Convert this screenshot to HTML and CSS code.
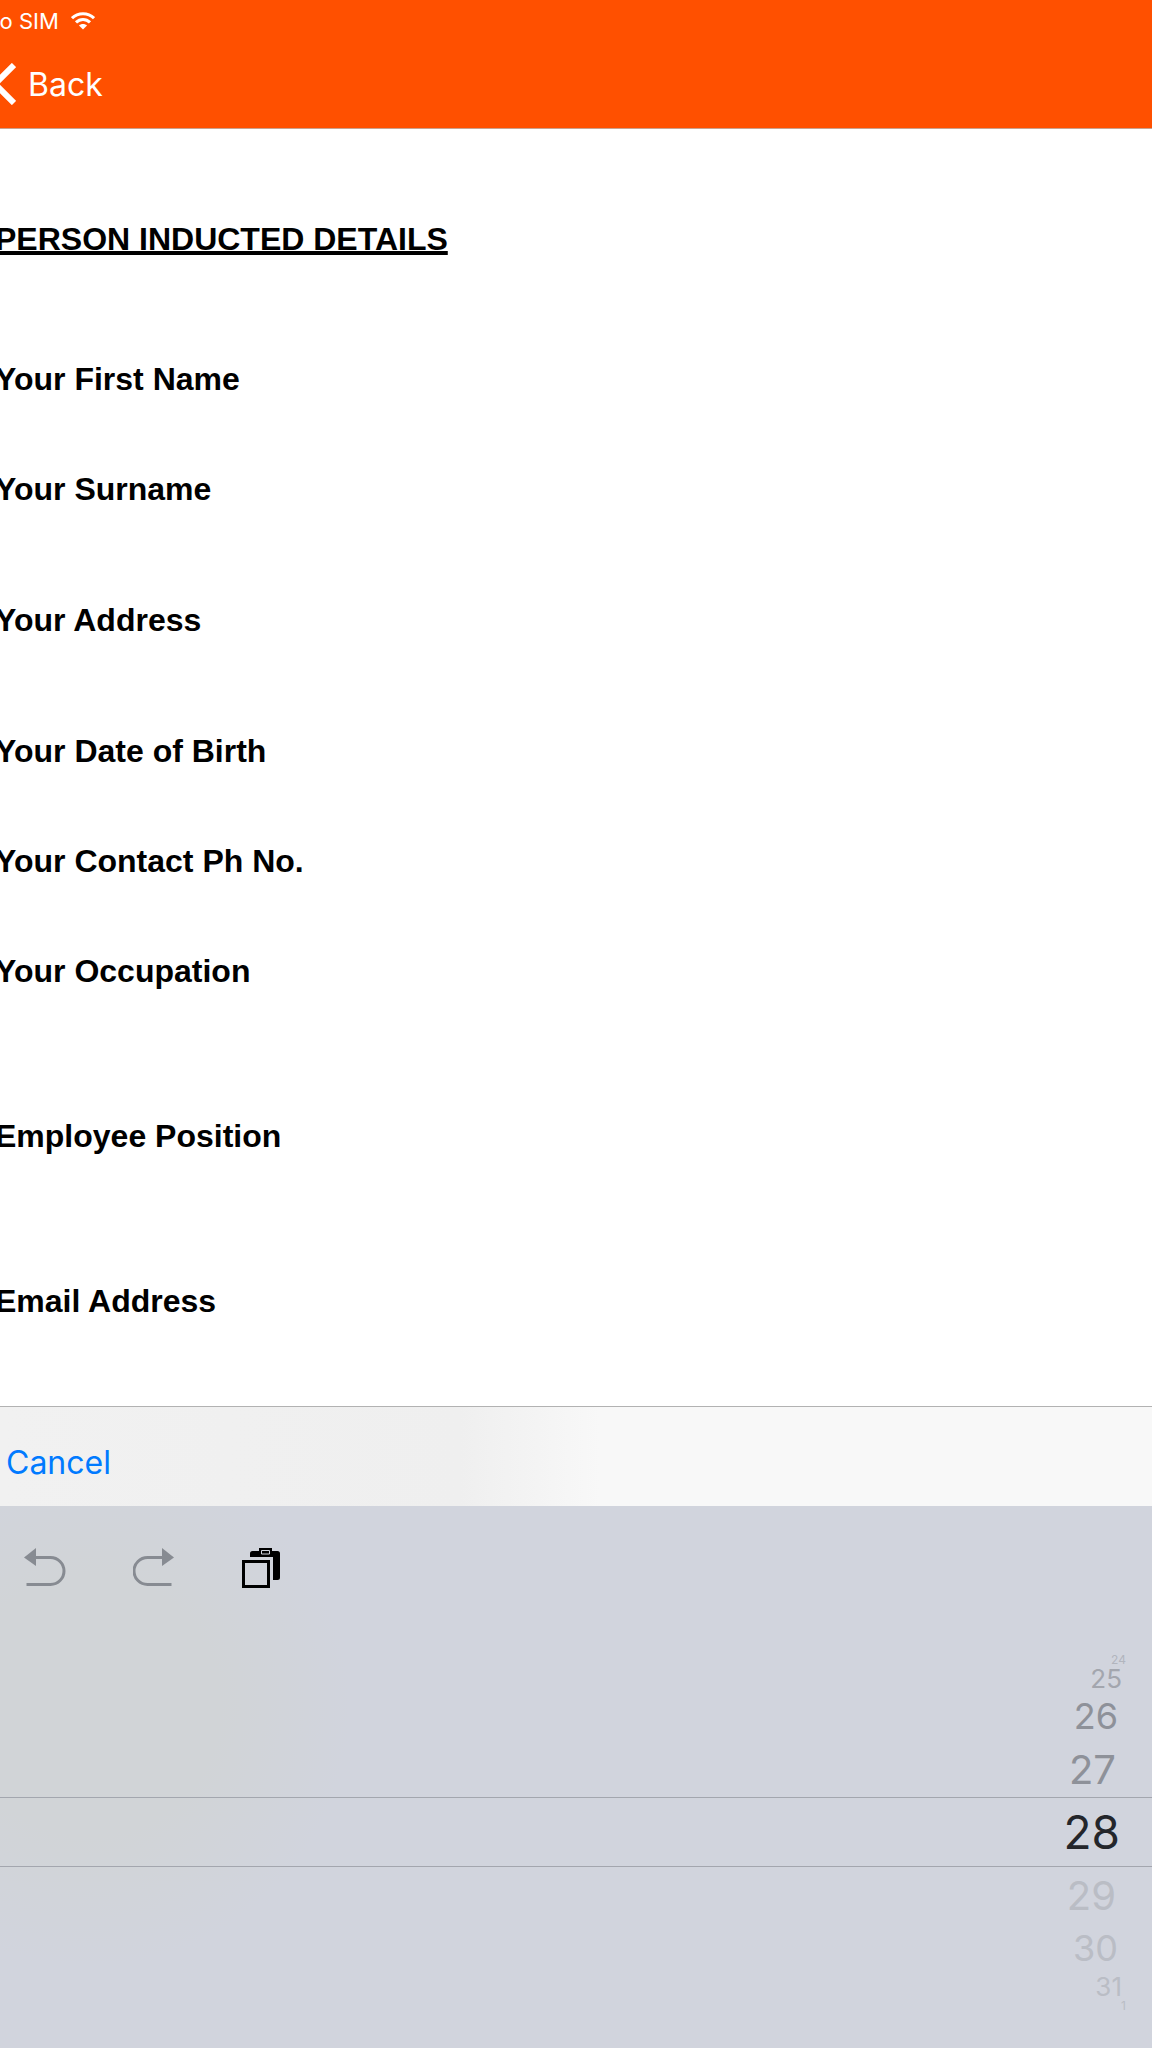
FILE: index.html
```html
<!DOCTYPE html>
<html lang="en">
<head>
<meta charset="utf-8">
<meta name="viewport" content="width=device-width, initial-scale=1">
<title>Person Inducted Details</title>
<link rel="stylesheet" href="styles.css">
</head>
<body>
<header class="header">
  <div class="status">
    <span class="carrier">No SIM</span>
    <svg class="wifi" width="24" height="18" viewBox="0 0 24 18" aria-hidden="true">
      <g fill="none" stroke="#fff" stroke-width="3">
        <path d="M1 6.2C7 .2 17 .2 23 6.2"/>
        <path d="M5 10.4C9 6.4 15 6.4 19 10.4"/>
      </g>
      <path d="M12 17.5L8 13.6C10 11.6 14 11.6 16 13.6Z" fill="#fff"/>
    </svg>
  </div>
  <button class="back" type="button">
    <svg width="26" height="42" viewBox="0 0 26 42" aria-hidden="true"><path d="M24 2L5 21L24 40" fill="none" stroke="#fff" stroke-width="6"/></svg>
    <span>Back</span>
  </button>
</header>

<main class="form">
  <h1 class="title">PERSON INDUCTED DETAILS</h1>
  <div class="row"><label for="first">Your First Name</label><input id="first" type="text"></div>
  <div class="row"><label for="surname">Your Surname</label><input id="surname" type="text"></div>
  <div class="row row-medium"><label for="address">Your Address</label><input id="address" type="text"></div>
  <div class="row"><label for="dob">Your Date of Birth</label><input id="dob" type="text"></div>
  <div class="row"><label for="phone">Your Contact Ph No.</label><input id="phone" type="tel"></div>
  <div class="row"><label for="job">Your Occupation</label><input id="job" type="text"></div>
  <div class="row row-tall"><label for="position">Employee Position</label><input id="position" type="text"></div>
  <div class="row"><label for="email">Email Address</label><input id="email" type="email"></div>
</main>

<div class="accessory"><button class="cancel" type="button">Cancel</button></div>

<section class="keyboard">
  <div class="tools">
    <button type="button" aria-label="Undo">
      <svg width="42" height="42" viewBox="0 0 42 42"><path d="M0 9.500L12 0V18Z" fill="#878b92"/><path d="M10 9.500H26.500a13.500 13.500 0 0 1 0 27H2.500" fill="none" stroke="#878b92" stroke-width="3"/></svg>
    </button>
    <button type="button" aria-label="Redo">
      <svg width="42" height="42" viewBox="0 0 42 42"><path d="M41 9.500L29 0V18Z" fill="#878b92"/><path d="M31 9.500H14.500a13.500 13.500 0 0 0 0 27H38.500" fill="none" stroke="#878b92" stroke-width="3"/></svg>
    </button>
    <button type="button" aria-label="Paste">
      <svg width="42" height="42" viewBox="0 0 42 42"><path d="M8 9V5.500Q8 3 10.500 3H17V0H30V3H35.500Q38 3 38 5.500V29.500Q38 32 35.500 32H31V9Z"/><path d="M19.500 2.500H27.500V6H19.500Z" fill="none" stroke="#d1d4dd" stroke-width="1"/><path d="M1.500 13.500H26.500V38.500H1.500Z" fill="none" stroke="#000" stroke-width="3"/></svg>
    </button>
  </div>
  <ul class="wheel" role="listbox" aria-label="Day">
    <li class="day edge past" role="option">24</li>
    <li class="day far past" role="option">25</li>
    <li class="day mid past" role="option">26</li>
    <li class="day near past" role="option">27</li>
    <li class="day selected" role="option" aria-selected="true">28</li>
    <li class="day near" role="option">29</li>
    <li class="day mid" role="option">30</li>
    <li class="day far" role="option">31</li>
    <li class="day edge" role="option">1</li>
  </ul>
</section>
</body>
</html>
```
FILE: styles.css
```css
* {
  box-sizing: border-box;
}

body {
  margin: 0;
  min-height: 100vh;
  display: flex;
  flex-direction: column;
  overflow-x: hidden;
  background: #fff;
  color: #000;
  font-family: Inter, "Liberation Sans", sans-serif;
}

button {
  border: 0;
  padding: 0;
  background: none;
  font: inherit;
  color: inherit;
}

svg {
  display: block;
}

.header {
  height: 129px;
  background: #ff5000;
  border-bottom: 1px solid #c9a18e;
  color: #fff;
}

.status {
  display: flex;
  align-items: center;
  gap: 12px;
  height: 42px;
  margin-left: -17px;
  font-size: 22px;
}

.back {
  display: flex;
  align-items: center;
  gap: 12px;
  height: 84px;
  margin-left: -10px;
  font-size: 32px;
}

.form {
  font-family: "Liberation Sans", Arial, sans-serif;
  font-size: 32px;
  font-weight: bold;
  padding-bottom: 50px;
  margin-left: -5px;
}

.title {
  margin: 0;
  padding: 92px 0 66px;
  font-size: 32px;
  line-height: 37px;
  text-decoration: underline;
  text-decoration-thickness: 4px;
  text-underline-offset: 1px;
  text-decoration-skip-ink: none;
}

.row {
  display: flex;
  align-items: center;
  gap: 24px;
  height: 110px;
}

.row-medium {
  height: 152px;
}

.row-tall {
  height: 220px;
}

.row input {
  flex: 1;
  min-width: 0;
  height: 48px;
  border: 0;
  background: transparent;
  font: inherit;
  font-weight: normal;
}

.accessory {
  display: flex;
  align-items: center;
  height: 100px;
  padding: 12px 6px 0;
  border-top: 1px solid #b2b2b2;
  background: linear-gradient(90deg, #f1f1f1, #efefef 460px, #f8f8f8 600px);
}

.cancel {
  color: #007aff;
  font-size: 32px;
}

.keyboard {
  flex: 1;
  background: radial-gradient(ellipse 260px 260px at 90px 200px, #d1d4d7 50%, #d1d4dd);
}

.tools {
  display: flex;
  align-items: flex-start;
  gap: 67px;
  height: 147px;
  padding: 42px 24px 0;
}

.wheel {
  display: flex;
  flex-direction: column;
  margin: 0;
  padding: 0;
  list-style: none;
}

.day {
  display: flex;
  align-items: center;
  justify-content: flex-end;
  color: #babdc5;
}

.past {
  color: #8e9199;
}

.selected {
  height: 70px;
  padding-right: 32px;
  border-top: 1px solid #a3a6ae;
  border-bottom: 1px solid #a3a6ae;
  color: #24262b;
  font-size: 46px;
}

.near {
  height: 56px;
  padding-right: 36px;
  font-size: 40px;
}

.mid {
  height: 50px;
  padding-right: 34px;
  font-size: 36px;
}

.far {
  height: 26px;
  padding-right: 30px;
  font-size: 26px;
}

.far.past {
  color: #a3a6ae;
}

.edge {
  height: 12px;
  padding-right: 26px;
  font-size: 12px;
}

.edge.past {
  color: #b2b5bd;
}
```
